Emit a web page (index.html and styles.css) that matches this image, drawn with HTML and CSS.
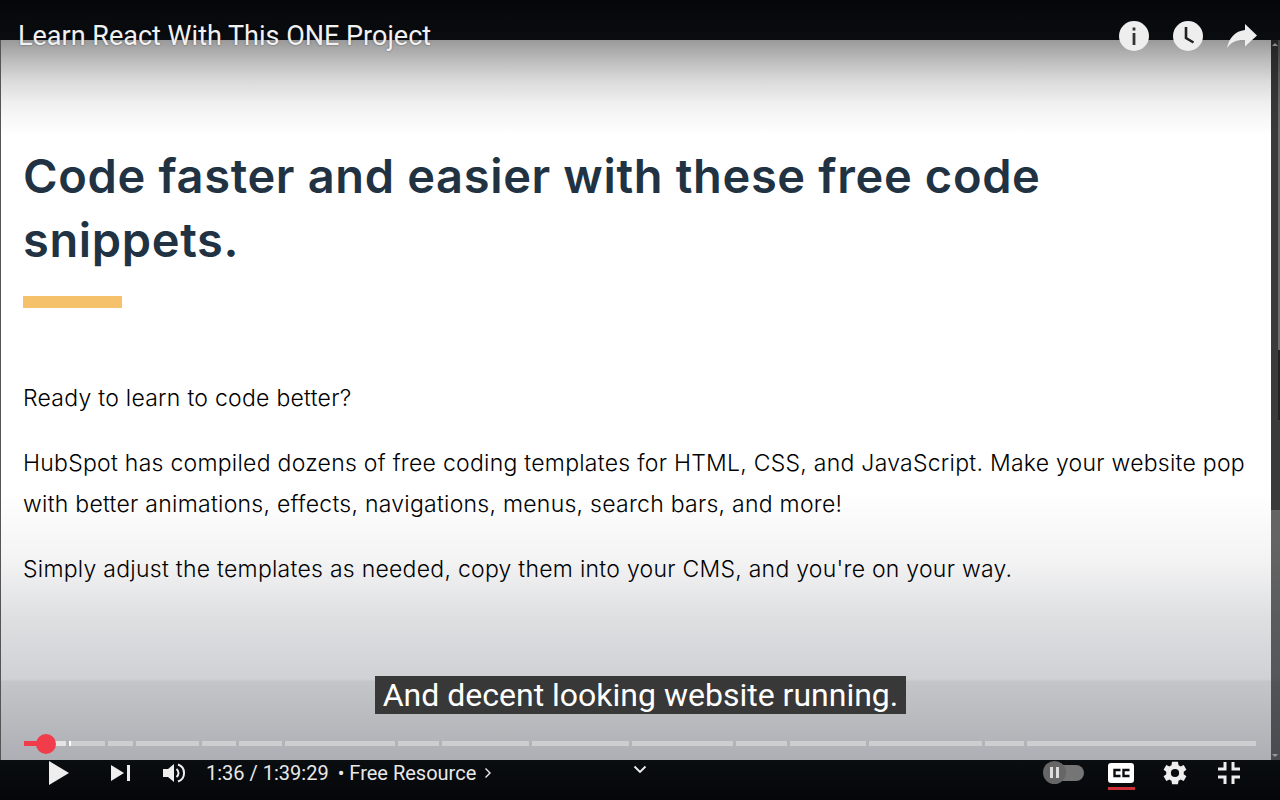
FILE: index.html
```html
<!DOCTYPE html>
<html lang="en">
<head>
    <meta charset="UTF-8">
    <title>Learn React With This ONE Project</title>
    <link rel="stylesheet" href="styles.css">
</head>
<body>

    <div class="top-bar"></div>

    <div class="video">
        <div class="slide">
            <h1>Code faster and easier with these free code snippets.</h1>
            <div class="accent"></div>
            <p class="first">Ready to learn to code better?</p>
            <p>HubSpot has compiled dozens of free coding templates for HTML, CSS, and JavaScript. Make your website pop with better animations, effects, navigations, menus, search bars, and more!</p>
            <p>Simply adjust the templates as needed, copy them into your CMS, and you're on your way.</p>
        </div>
        <div class="scrollbar">
            <div class="arrow-up"></div>
            <div class="thumb-strip"></div>
            <div class="thumb-dark"></div>
            <div class="thumb-light"></div>
            <div class="arrow-down"></div>
        </div>
        <div class="shade-top"></div>
        <div class="shade-bottom"></div>
    </div>

    <div class="title-row">
        <span class="video-title">Learn React With This ONE Project</span>
        <div class="top-icons">
            <svg width="32" height="32" viewBox="0 0 32 32"><circle cx="16" cy="16" r="15" fill="#eee"/><rect x="14.6" y="13" width="2.8" height="12" fill="#333"/><rect x="14.6" y="7.5" width="2.8" height="3" fill="#333"/></svg>
            <svg width="32" height="32" viewBox="0 0 32 32"><circle cx="16" cy="16" r="15" fill="#eee"/><path d="M14 7v11l7.500 4.500" fill="none" stroke="#222" stroke-width="2.600"/></svg>
            <svg width="32" height="32" viewBox="0 0 32 32"><path d="M19 4l12 11.500-12 11v-6.500C11 19.500 5 22 1 28 3 18 9 11 19 10z" fill="#eee"/></svg>
        </div>
    </div>

    <div class="caption">And decent looking website running.</div>

    <div class="progress">
        <div class="seg played"></div>
        <div class="seg s1"></div>
        <div class="seg s2"><span class="buffered"></span></div>
        <div class="seg s3"></div>
        <div class="seg s4"></div>
        <div class="seg s5"></div>
        <div class="seg s6"></div>
        <div class="seg s7"></div>
        <div class="seg s8"></div>
        <div class="seg s9"></div>
        <div class="seg s10"></div>
        <div class="seg s11"></div>
        <div class="seg s12"></div>
        <div class="seg s13"></div>
        <div class="seg s14"></div>
        <div class="seg s15"></div>
        <div class="seg s16"></div>
        <div class="scrubber"></div>
    </div>

    <div class="controls">
        <div class="left-controls">
            <svg class="play" width="22" height="26" viewBox="0 0 22 26"><path d="M1 1l20 12L1 25z" fill="#eee"/></svg>
            <svg class="next" width="20" height="18" viewBox="0 0 20 18"><path d="M0 1l13 8L0 17z" fill="#eee"/><rect x="16" y="1" width="3" height="16" fill="#eee"/></svg>
            <svg class="volume" width="24" height="22" viewBox="0 0 24 22"><path d="M1 7h5l6-5v18l-6-5H1z" fill="#eee"/><path d="M14.500 7a5 5 0 0 1 0 8" fill="none" stroke="#eee" stroke-width="2"/><path d="M16 2.500a9 9 0 0 1 0 17" fill="none" stroke="#eee" stroke-width="2"/></svg>
            <span class="time">1:36 / 1:39:29</span>
            <span class="chapter">• Free Resource</span>
            <svg class="chapter-arrow" width="8" height="12" viewBox="0 0 8 12"><path d="M1.500 1.500L6 6l-4.500 4.500" fill="none" stroke="#eee" stroke-width="1.400"/></svg>
        </div>
        <svg class="chevron" width="14" height="9" viewBox="0 0 14 9"><path d="M1.500 1.500L7 7l5.500-5.500" fill="none" stroke="#eee" stroke-width="1.800"/></svg>
        <div class="right-controls">
            <div class="autoplay">
                <div class="autoplay-track"></div>
                <div class="autoplay-knob"><span></span><span></span></div>
            </div>
            <div class="cc">
                <svg width="26" height="20" viewBox="0 0 26 20"><rect width="26" height="20" rx="3" fill="#fff"/><path d="M12.500 7H6.500v6h6M21.500 7h-6v6h6" fill="none" stroke="#0a0d10" stroke-width="2.400"/></svg>
                <div class="cc-line"></div>
            </div>
            <svg class="gear" width="24" height="24" viewBox="1.800 2 20.400 20"><path fill-rule="evenodd" d="M19.400 13a7.500 7.500 0 0 0 0-2l2.300-1.800-2.300-3.900-2.700 1.100a7.500 7.500 0 0 0-1.700-1L14.500 2.500h-5L9 5.400a7.500 7.500 0 0 0-1.700 1L4.600 5.300 2.300 9.200 4.600 11a7.500 7.500 0 0 0 0 2l-2.300 1.800 2.300 3.900 2.700-1.100a7.500 7.500 0 0 0 1.700 1l.5 2.900h5l.5-2.900a7.500 7.500 0 0 0 1.700-1l2.700 1.100 2.300-3.900zM12 15.500a3.500 3.500 0 1 1 0-7 3.500 3.500 0 0 1 0 7z" fill="#eee"/></svg>
            <svg width="24" height="24" viewBox="0 0 24 24"><path d="M8 1v7H1M16 1v7h7M8 23v-7H1M16 23v-7h7" fill="none" stroke="#eee" stroke-width="3"/></svg>
        </div>
    </div>

</body>
</html>
```

FILE: styles.css
```css
body {
    margin: 0;
    width: 1280px;
    height: 800px;
    overflow: hidden;
    position: relative;
    background-color: #0a0d10;
    font-family: Roboto, Arial, sans-serif;
}

.top-bar {
    height: 40px;
    background: linear-gradient(#050608, #0a0d10);
}

.video {
    height: 720px;
    position: relative;
    display: flex;
    overflow: hidden;
    border-left: 1px solid #555;
}

.slide {
    flex: 1;
    min-width: 0;
    background-color: #fff;
    padding: 0 22px;
    font-family: Inter, Arial, sans-serif;
}

.shade-top {
    position: absolute;
    top: 0;
    left: 0;
    right: 0;
    height: 95px;
    background: linear-gradient(rgba(0, 0, 0, 0.4), rgba(0, 0, 0, 0.26) 22%, rgba(0, 0, 0, 0.14) 44%, rgba(0, 0, 0, 0.06) 67%, rgba(0, 0, 0, 0.02) 89%, rgba(0, 0, 0, 0));
}

.shade-bottom {
    position: absolute;
    left: 0;
    right: 0;
    bottom: 0;
    height: 270px;
    background: linear-gradient(rgba(20, 25, 40, 0), rgba(20, 25, 40, 0.05) 26%, rgba(20, 25, 40, 0.14) 48%, rgba(20, 25, 40, 0.2) 70%, rgba(20, 25, 40, 0.25) 71%, rgba(20, 25, 40, 0.35));
}

h1 {
    margin: 104px 0 0;
    width: 1100px;
    font-size: 47px;
    line-height: 64px;
    font-weight: 600;
    letter-spacing: 0.65px;
    color: #213343;
}

.accent {
    width: 99px;
    height: 12px;
    margin-top: 24px;
    background-color: #f5c26b;
}

p {
    margin: 0 0 24px;
    font-size: 23px;
    line-height: 41px;
    font-weight: 300;
    letter-spacing: 0.26px;
    color: #000;
    width: 1230px;
}

p.first {
    margin-top: 70px;
}

.scrollbar {
    width: 9px;
    flex-shrink: 0;
    background-color: #3a3a3a;
    position: relative;
}

.thumb-strip {
    position: absolute;
    top: 0;
    height: 310px;
    left: 7px;
    width: 2px;
    background-color: #6e6e6e;
}

.thumb-dark {
    position: absolute;
    top: 310px;
    left: 7px;
    width: 2px;
    height: 70px;
    background-color: #222;
}

.thumb-light {
    position: absolute;
    top: 470px;
    bottom: 0;
    left: 0;
    right: 0;
    background-color: #666;
}

.arrow-up {
    position: absolute;
    top: 3px;
    left: 1px;
    border-left: 3px solid transparent;
    border-right: 3px solid transparent;
    border-bottom: 3px solid #ddd;
}

.arrow-down {
    position: absolute;
    bottom: 3px;
    left: 1px;
    border-left: 3px solid transparent;
    border-right: 3px solid transparent;
    border-top: 3px solid #ddd;
}

.title-row {
    position: absolute;
    top: 20px;
    left: 18px;
    right: 22px;
    display: flex;
    justify-content: space-between;
    align-items: center;
}

.video-title {
    font-size: 27px;
    color: #f1f1f1;
    text-shadow: 0 0 2px rgba(0, 0, 0, 0.5);
}

.top-icons {
    display: flex;
    gap: 22px;
}

.caption {
    position: absolute;
    top: 676px;
    left: 375px;
    width: 531px;
    height: 38px;
    line-height: 38px;
    text-align: center;
    font-size: 32px;
    color: #fff;
    background-color: #383838;
}

.progress {
    position: absolute;
    top: 741px;
    left: 24px;
    width: 1232px;
    height: 5px;
    display: flex;
    gap: 3px;
}

.seg {
    height: 5px;
    background-color: #cdced0;
}

.played { width: 22px; background-color: #f03c4b; }
.s1 { width: 17px; background-color: #e4e4e4; }
.s2 { width: 36px; position: relative; }
.buffered { position: absolute; left: 0; top: 0; width: 2px; height: 5px; background-color: #fff; }
.s3 { width: 25px; }
.s4 { width: 63px; }
.s5 { width: 34px; }
.s6 { width: 43px; }
.s7 { width: 110px; }
.s8 { width: 41px; }
.s9 { width: 87px; }
.s10 { width: 97px; }
.s11 { width: 101px; }
.s12 { width: 51px; }
.s13 { width: 76px; }
.s14 { width: 113px; }
.s15 { width: 39px; }
.s16 { flex: 1; }

.scrubber {
    position: absolute;
    left: 12px;
    top: -7px;
    width: 20px;
    height: 20px;
    border-radius: 50%;
    background-color: #f03c4b;
}

.controls {
    position: absolute;
    left: 0;
    right: 0;
    top: 760px;
    height: 40px;
    background: linear-gradient(#0a0e11, #050608);
}

.left-controls {
    position: absolute;
    top: 0;
    left: 48px;
    height: 26px;
    display: flex;
    align-items: center;
    color: #e8e8e8;
}

.play { margin-right: 41px; }
.next { margin-right: 31px; }
.volume { margin-right: 20px; }

.time {
    font-size: 20px;
    margin-right: 9px;
}

.chapter {
    font-size: 20px;
    margin-right: 8px;
}

.chevron {
    position: absolute;
    left: 633px;
    top: 5px;
}

.right-controls {
    position: absolute;
    top: 1px;
    right: 39px;
    display: flex;
    align-items: center;
    gap: 24px;
    height: 24px;
}

.autoplay {
    position: relative;
    width: 41px;
    height: 24px;
}

.autoplay-track {
    position: absolute;
    left: 3px;
    top: 4px;
    width: 38px;
    height: 16px;
    border-radius: 8px;
    background-color: #757575;
}

.autoplay-knob {
    position: absolute;
    left: 0;
    top: 0;
    width: 23px;
    height: 23px;
    border-radius: 50%;
    background-color: #666;
    display: flex;
    justify-content: center;
    align-items: center;
    gap: 3px;
}

.autoplay-knob span {
    width: 3px;
    height: 11px;
    background-color: #ddd;
}

.cc {
    position: relative;
    width: 27px;
    height: 20px;
    margin-right: 4px;
}

.gear {
    margin-right: 6px;
}

.cc-line {
    position: absolute;
    top: 24px;
    left: 0;
    width: 27px;
    height: 3px;
    background-color: #cc2f38;
}
```
